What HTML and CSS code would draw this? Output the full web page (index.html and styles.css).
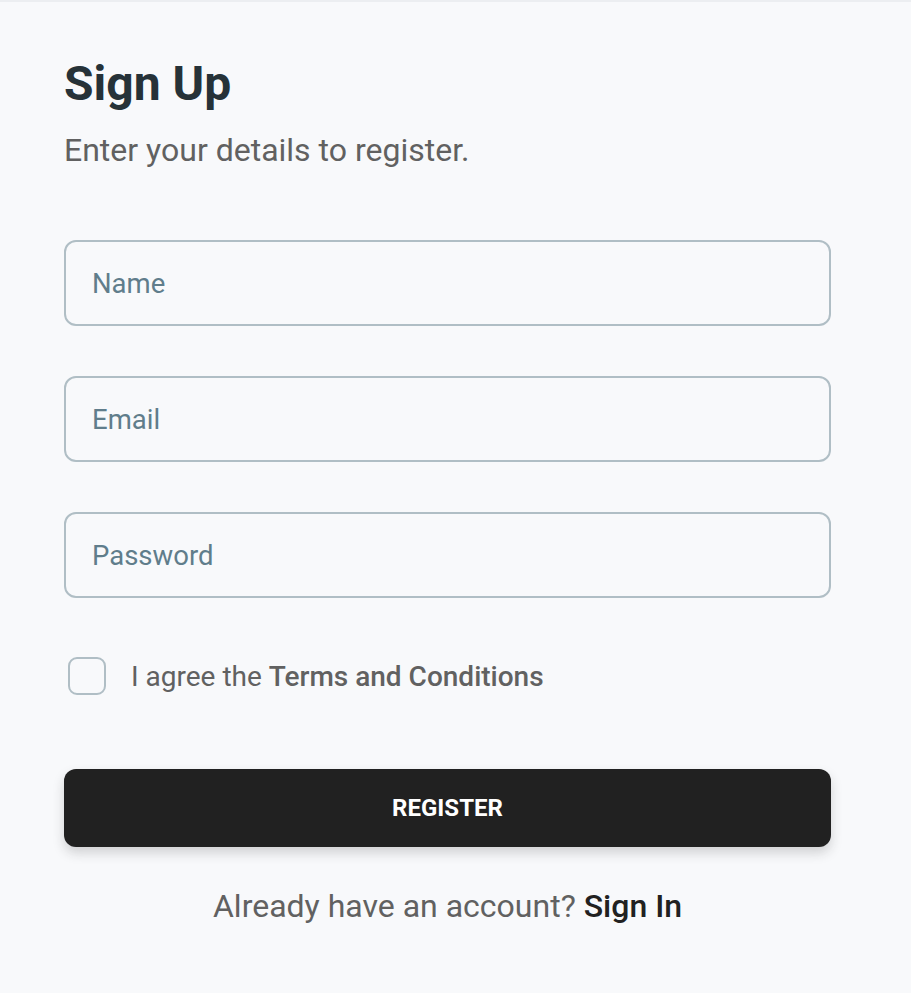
FILE: index.html
```html
<!DOCTYPE html>
<html lang="en">
<head>
<meta charset="utf-8">
<title>Sign Up</title>
<link rel="stylesheet" href="styles.css">
</head>
<body>
<div class="topline"></div>
<main class="card">
  <h1 class="title">Sign Up</h1>
  <p class="subtitle">Enter your details to register.</p>
  <form class="form">
    <div class="fields">
      <input class="field" type="text" placeholder="Name">
      <input class="field" type="email" placeholder="Email">
      <input class="field" type="password" placeholder="Password">
    </div>
    <label class="agree">
      <span class="box"></span>
      <span class="agree-text">I agree the <strong>Terms and Conditions</strong></span>
    </label>
    <button class="register" type="button">REGISTER</button>
    <p class="signin">Already have an account? <a href="#">Sign In</a></p>
  </form>
</main>
</body>
</html>
```
FILE: styles.css
```css
* { box-sizing: border-box; }
html, body { margin: 0; padding: 0; }
body {
  background: #f8f9fb;
  font-family: Roboto, "Liberation Sans", sans-serif;
  width: 911px;
  height: 993px;
  overflow: hidden;
}
.topline { height: 2px; background: #eceef1; }
.card {
  padding: 52px 80px 0 64px;
  width: 911px;
}
.title {
  margin: 0;
  font-size: 48px;
  font-weight: 700;
  line-height: 60px;
  color: #263238;
}
.subtitle {
  margin: 14px 0 0;
  font-size: 32px;
  line-height: 44px;
  color: #616161;
}
.form { margin-top: 68px; width: 767px; }
.fields { display: flex; flex-direction: column; gap: 50px; }
.field {
  display: block;
  width: 767px;
  height: 86px;
  border: 2px solid #b0bec5;
  border-radius: 12px;
  background: #f8f9fb;
  padding: 0 26px;
  font-family: Roboto, "Liberation Sans", sans-serif;
  font-size: 27.5px;
  color: #263238;
  outline: none;
}
.field::placeholder { color: #607d8b; opacity: 1; }
.agree {
  display: flex;
  align-items: center;
  gap: 25px;
  margin-top: 59px;
  padding-left: 4px;
}
.box {
  width: 38px;
  height: 38px;
  border: 2px solid #b0bec5;
  border-radius: 9px;
  flex: none;
}
.agree-text {
  font-size: 28px;
  color: #616161;
}
.agree-text strong { font-weight: 500; }
.register {
  display: block;
  width: 767px;
  height: 78px;
  margin-top: 74px;
  border: none;
  border-radius: 12px;
  background: #212121;
  color: #fff;
  font-family: Roboto, "Liberation Sans", sans-serif;
  font-size: 24px;
  font-weight: 700;
  box-shadow: 0 6px 12px rgba(33,33,33,0.18);
}
.signin {
  margin: 40px 0 0;
  text-align: center;
  font-size: 32px;
  color: #616161;
}
.signin a { color: #212121; font-weight: 500; text-decoration: none; }
```
